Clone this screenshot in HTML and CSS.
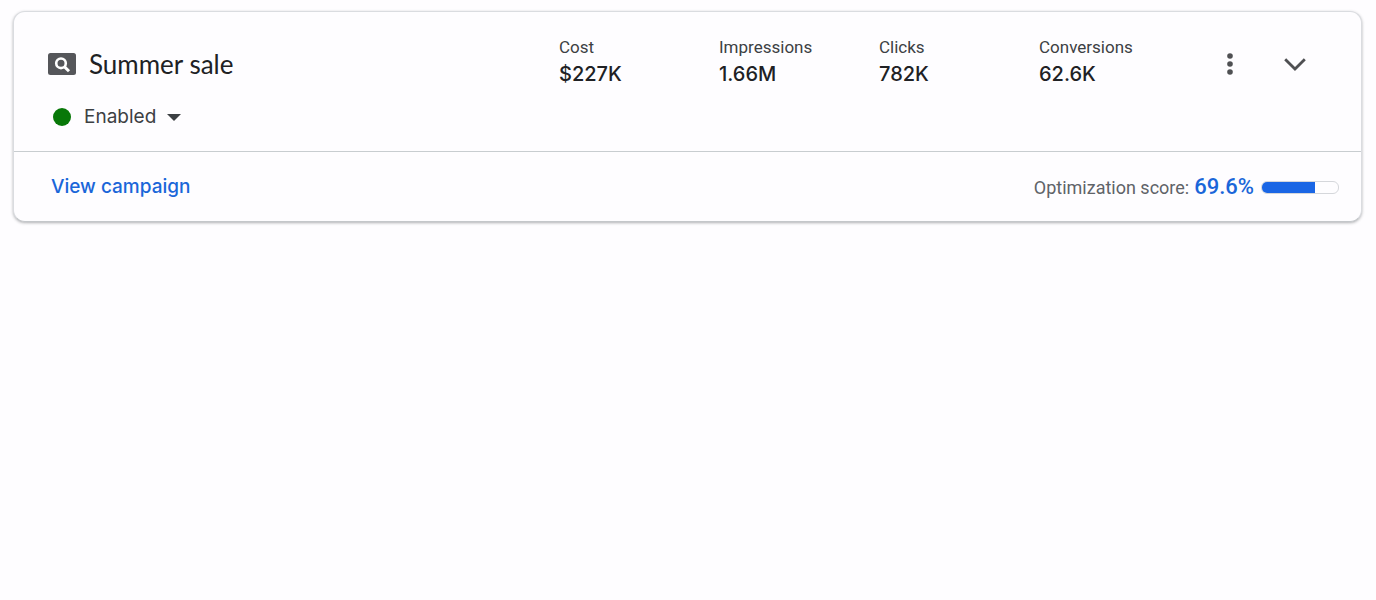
FILE: index.html
```html
<!DOCTYPE html>
<html lang="en">
<head>
  <meta charset="UTF-8">
  <meta name="viewport" content="width=device-width, initial-scale=1.0">
  <title>Summer sale</title>
  <link rel="stylesheet" href="styles.css">
</head>
<body>
  <main class="campaign-card">
    <header class="card-header">
      <div class="campaign">
        <div class="campaign-title">
          <svg class="search-icon" viewBox="0 0 28 22" aria-hidden="true">
            <rect width="28" height="22" rx="2.5" fill="#55565a"/>
            <circle cx="13" cy="10.3" r="4.8" fill="none" stroke="#fff" stroke-width="2.6"/>
            <path d="M16.3 13.6l4.7 4.7" stroke="#fff" stroke-width="3"/>
          </svg>
          <h1>Summer sale</h1>
        </div>
        <div class="status">
          <span class="status-dot"></span>
          <select id="status" class="status-select" aria-label="Campaign status">
            <option value="enabled">Enabled</option>
            <option value="paused">Paused</option>
          </select>
        </div>
      </div>

      <dl class="metrics">
        <div class="metric">
          <dt>Cost</dt>
          <dd>$227K</dd>
        </div>
        <div class="metric">
          <dt>Impressions</dt>
          <dd>1.66M</dd>
        </div>
        <div class="metric">
          <dt>Clicks</dt>
          <dd>782K</dd>
        </div>
        <div class="metric">
          <dt>Conversions</dt>
          <dd>62.6K</dd>
        </div>
      </dl>

      <div class="actions">
        <button type="button" class="icon-btn" aria-label="More options">
          <svg viewBox="0 0 24 24" width="24" height="24" aria-hidden="true">
            <circle cx="12" cy="4" r="2.8"/>
            <circle cx="12" cy="12" r="2.8"/>
            <circle cx="12" cy="20" r="2.8"/>
          </svg>
        </button>
        <button type="button" class="icon-btn" aria-label="Expand">
          <svg viewBox="0 0 24 24" width="24" height="24" aria-hidden="true">
            <path d="M2.2 7.2l9.8 9.8 9.8-9.8" fill="none" stroke="#4f5053" stroke-width="2.8"/>
          </svg>
        </button>
      </div>
    </header>

    <footer class="card-footer">
      <a class="view-link" href="#">View campaign</a>
      <div class="score">
        <span class="score-label">Optimization score:</span>
        <span class="score-value">69.6%</span>
        <div class="score-bar">
          <div class="score-fill" style="width: 69.6%"></div>
        </div>
      </div>
    </footer>
  </main>
</body>
</html>
```
FILE: styles.css
```css
* {
  box-sizing: border-box;
}
body {
  font-family: Roboto, Arial, sans-serif;
  margin: 0;
  padding: 11px 14px 12px 13px;
  background-color: #fefdff;
  color: #3c4043;
}
.campaign-card {
  border: 1px solid #dadce0;
  border-bottom-color: #c4c7ca;
  border-radius: 12px;
  box-shadow: 0 1px 3px rgba(60,64,67,0.4);
  background-color: #fefdff;
}
.card-header {
  display: flex;
  align-items: flex-start;
  padding: 23px 46px 22px 34px;
  border-bottom: 1px solid #c8cdd0;
}
.campaign {
  flex: 1;
  padding-top: 13px;
}
.campaign-title {
  display: flex;
  align-items: center;
  gap: 13px;
}
.search-icon {
  width: 28px;
  height: 22px;
}
h1 {
  margin: 0;
  font-family: "Google Sans", Lato, sans-serif;
  font-size: 26px;
  font-weight: 400;
  line-height: 32px;
  color: #202124;
}
.status {
  display: flex;
  align-items: center;
  gap: 13px;
  padding-left: 5px;
  margin-top: 25px;
}
.status-dot {
  width: 18px;
  height: 18px;
  border-radius: 50%;
  background-color: #087808;
}
.status-select {
  appearance: none;
  margin: 0;
  padding: 0 24px 0 0;
  border: none;
  background: url("data:image/svg+xml,%3Csvg xmlns='http://www.w3.org/2000/svg' viewBox='0 0 14 7'%3E%3Cpath d='M0 0h14L7 7z' fill='%233c4043'/%3E%3C/svg%3E") no-repeat right center / 14px 7px;
  font-family: "Google Sans", Inter, sans-serif;
  font-size: 19px;
  line-height: 24px;
  color: #3c4043;
  cursor: pointer;
}
.metrics {
  display: flex;
  margin: 0;
}
.metric {
  width: 160px;
}
dt {
  font-size: 17px;
  line-height: 24px;
}
dd {
  margin: 0;
  font-family: "Google Sans", Inter, sans-serif;
  font-size: 20px;
  font-weight: 500;
  line-height: 30px;
  color: #202124;
}
.actions {
  display: flex;
  gap: 25px;
  padding: 9px 0 0 11px;
}
.icon-btn {
  display: flex;
  align-items: center;
  justify-content: center;
  width: 40px;
  height: 40px;
  padding: 0;
  border: none;
  border-radius: 50%;
  background: none;
  fill: #4f5053;
  cursor: pointer;
}
.card-footer {
  display: flex;
  align-items: center;
  justify-content: space-between;
  padding: 21px 22px 20px 37px;
}
.view-link {
  font-family: "Google Sans", Inter, sans-serif;
  font-size: 19px;
  font-weight: 500;
  line-height: 28px;
  color: #1a66d9;
  text-decoration: none;
}
.score {
  display: flex;
  align-items: center;
}
.score-label {
  margin-right: 5px;
  font-size: 18px;
  color: #5f6368;
}
.score-value {
  margin-right: 7px;
  font-size: 22px;
  font-weight: 500;
  line-height: 28px;
  color: #1a66d9;
}
.score-bar {
  width: 78px;
  height: 13px;
  border: 1px solid #d5d7db;
  border-radius: 6px;
  overflow: hidden;
}
.score-fill {
  height: 100%;
  background-color: #1a66e5;
}
```
